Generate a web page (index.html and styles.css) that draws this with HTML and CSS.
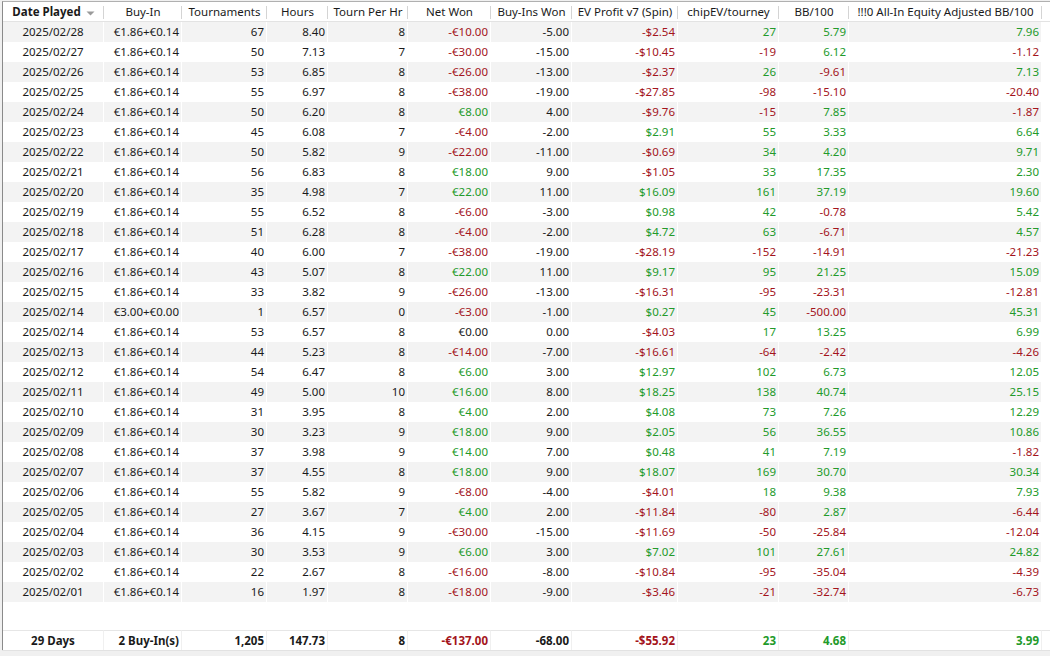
FILE: index.html
```html
<!DOCTYPE html>
<html>
<head>
<meta charset="utf-8">
<link rel="stylesheet" href="styles.css">
</head>
<body>
<div class="frame">
<div class="grid">
<table class="stats">
<colgroup>
<col class="c1"><col class="c2"><col class="c3"><col class="c4"><col class="c5"><col class="c6"><col class="c7"><col class="c8"><col class="c9"><col class="c10"><col class="c11"><col class="c12">
</colgroup>
<thead>
<tr>
<th class="sorted">Date Played <svg class="arrow" width="9" height="6" viewBox="0 0 9 6"><path d="M0.5 1.5 L8.5 1.5 L4.5 5.5 Z" fill="#9a9a9a"/></svg></th>
<th>Buy-In</th><th>Tournaments</th><th>Hours</th><th>Tourn Per Hr</th><th>Net Won</th><th>Buy-Ins Won</th><th>EV Profit v7 (Spin)</th><th>chipEV/tourney</th><th>BB/100</th><th>!!!0 All-In Equity Adjusted BB/100</th><th class="fill"></th>
</tr>
</thead>
<tbody>
<tr><td>2025/02/28</td><td>€1.86+€0.14</td><td>67</td><td>8.40</td><td>8</td><td class="n">-€10.00</td><td>-5.00</td><td class="n">-$2.54</td><td class="p">27</td><td class="p">5.79</td><td class="p">7.96</td><td></td></tr>
<tr><td>2025/02/27</td><td>€1.86+€0.14</td><td>50</td><td>7.13</td><td>7</td><td class="n">-€30.00</td><td>-15.00</td><td class="n">-$10.45</td><td class="n">-19</td><td class="p">6.12</td><td class="n">-1.12</td><td></td></tr>
<tr><td>2025/02/26</td><td>€1.86+€0.14</td><td>53</td><td>6.85</td><td>8</td><td class="n">-€26.00</td><td>-13.00</td><td class="n">-$2.37</td><td class="p">26</td><td class="n">-9.61</td><td class="p">7.13</td><td></td></tr>
<tr><td>2025/02/25</td><td>€1.86+€0.14</td><td>55</td><td>6.97</td><td>8</td><td class="n">-€38.00</td><td>-19.00</td><td class="n">-$27.85</td><td class="n">-98</td><td class="n">-15.10</td><td class="n">-20.40</td><td></td></tr>
<tr><td>2025/02/24</td><td>€1.86+€0.14</td><td>50</td><td>6.20</td><td>8</td><td class="p">€8.00</td><td>4.00</td><td class="n">-$9.76</td><td class="n">-15</td><td class="p">7.85</td><td class="n">-1.87</td><td></td></tr>
<tr><td>2025/02/23</td><td>€1.86+€0.14</td><td>45</td><td>6.08</td><td>7</td><td class="n">-€4.00</td><td>-2.00</td><td class="p">$2.91</td><td class="p">55</td><td class="p">3.33</td><td class="p">6.64</td><td></td></tr>
<tr><td>2025/02/22</td><td>€1.86+€0.14</td><td>50</td><td>5.82</td><td>9</td><td class="n">-€22.00</td><td>-11.00</td><td class="n">-$0.69</td><td class="p">34</td><td class="p">4.20</td><td class="p">9.71</td><td></td></tr>
<tr><td>2025/02/21</td><td>€1.86+€0.14</td><td>56</td><td>6.83</td><td>8</td><td class="p">€18.00</td><td>9.00</td><td class="n">-$1.05</td><td class="p">33</td><td class="p">17.35</td><td class="p">2.30</td><td></td></tr>
<tr><td>2025/02/20</td><td>€1.86+€0.14</td><td>35</td><td>4.98</td><td>7</td><td class="p">€22.00</td><td>11.00</td><td class="p">$16.09</td><td class="p">161</td><td class="p">37.19</td><td class="p">19.60</td><td></td></tr>
<tr><td>2025/02/19</td><td>€1.86+€0.14</td><td>55</td><td>6.52</td><td>8</td><td class="n">-€6.00</td><td>-3.00</td><td class="p">$0.98</td><td class="p">42</td><td class="n">-0.78</td><td class="p">5.42</td><td></td></tr>
<tr><td>2025/02/18</td><td>€1.86+€0.14</td><td>51</td><td>6.28</td><td>8</td><td class="n">-€4.00</td><td>-2.00</td><td class="p">$4.72</td><td class="p">63</td><td class="n">-6.71</td><td class="p">4.57</td><td></td></tr>
<tr><td>2025/02/17</td><td>€1.86+€0.14</td><td>40</td><td>6.00</td><td>7</td><td class="n">-€38.00</td><td>-19.00</td><td class="n">-$28.19</td><td class="n">-152</td><td class="n">-14.91</td><td class="n">-21.23</td><td></td></tr>
<tr><td>2025/02/16</td><td>€1.86+€0.14</td><td>43</td><td>5.07</td><td>8</td><td class="p">€22.00</td><td>11.00</td><td class="p">$9.17</td><td class="p">95</td><td class="p">21.25</td><td class="p">15.09</td><td></td></tr>
<tr><td>2025/02/15</td><td>€1.86+€0.14</td><td>33</td><td>3.82</td><td>9</td><td class="n">-€26.00</td><td>-13.00</td><td class="n">-$16.31</td><td class="n">-95</td><td class="n">-23.31</td><td class="n">-12.81</td><td></td></tr>
<tr><td>2025/02/14</td><td>€3.00+€0.00</td><td>1</td><td>6.57</td><td>0</td><td class="n">-€3.00</td><td>-1.00</td><td class="p">$0.27</td><td class="p">45</td><td class="n">-500.00</td><td class="p">45.31</td><td></td></tr>
<tr><td>2025/02/14</td><td>€1.86+€0.14</td><td>53</td><td>6.57</td><td>8</td><td>€0.00</td><td>0.00</td><td class="n">-$4.03</td><td class="p">17</td><td class="p">13.25</td><td class="p">6.99</td><td></td></tr>
<tr><td>2025/02/13</td><td>€1.86+€0.14</td><td>44</td><td>5.23</td><td>8</td><td class="n">-€14.00</td><td>-7.00</td><td class="n">-$16.61</td><td class="n">-64</td><td class="n">-2.42</td><td class="n">-4.26</td><td></td></tr>
<tr><td>2025/02/12</td><td>€1.86+€0.14</td><td>54</td><td>6.47</td><td>8</td><td class="p">€6.00</td><td>3.00</td><td class="p">$12.97</td><td class="p">102</td><td class="p">6.73</td><td class="p">12.05</td><td></td></tr>
<tr><td>2025/02/11</td><td>€1.86+€0.14</td><td>49</td><td>5.00</td><td>10</td><td class="p">€16.00</td><td>8.00</td><td class="p">$18.25</td><td class="p">138</td><td class="p">40.74</td><td class="p">25.15</td><td></td></tr>
<tr><td>2025/02/10</td><td>€1.86+€0.14</td><td>31</td><td>3.95</td><td>8</td><td class="p">€4.00</td><td>2.00</td><td class="p">$4.08</td><td class="p">73</td><td class="p">7.26</td><td class="p">12.29</td><td></td></tr>
<tr><td>2025/02/09</td><td>€1.86+€0.14</td><td>30</td><td>3.23</td><td>9</td><td class="p">€18.00</td><td>9.00</td><td class="p">$2.05</td><td class="p">56</td><td class="p">36.55</td><td class="p">10.86</td><td></td></tr>
<tr><td>2025/02/08</td><td>€1.86+€0.14</td><td>37</td><td>3.98</td><td>9</td><td class="p">€14.00</td><td>7.00</td><td class="p">$0.48</td><td class="p">41</td><td class="p">7.19</td><td class="n">-1.82</td><td></td></tr>
<tr><td>2025/02/07</td><td>€1.86+€0.14</td><td>37</td><td>4.55</td><td>8</td><td class="p">€18.00</td><td>9.00</td><td class="p">$18.07</td><td class="p">169</td><td class="p">30.70</td><td class="p">30.34</td><td></td></tr>
<tr><td>2025/02/06</td><td>€1.86+€0.14</td><td>55</td><td>5.82</td><td>9</td><td class="n">-€8.00</td><td>-4.00</td><td class="n">-$4.01</td><td class="p">18</td><td class="p">9.38</td><td class="p">7.93</td><td></td></tr>
<tr><td>2025/02/05</td><td>€1.86+€0.14</td><td>27</td><td>3.67</td><td>7</td><td class="p">€4.00</td><td>2.00</td><td class="n">-$11.84</td><td class="n">-80</td><td class="p">2.87</td><td class="n">-6.44</td><td></td></tr>
<tr><td>2025/02/04</td><td>€1.86+€0.14</td><td>36</td><td>4.15</td><td>9</td><td class="n">-€30.00</td><td>-15.00</td><td class="n">-$11.69</td><td class="n">-50</td><td class="n">-25.84</td><td class="n">-12.04</td><td></td></tr>
<tr><td>2025/02/03</td><td>€1.86+€0.14</td><td>30</td><td>3.53</td><td>9</td><td class="p">€6.00</td><td>3.00</td><td class="p">$7.02</td><td class="p">101</td><td class="p">27.61</td><td class="p">24.82</td><td></td></tr>
<tr><td>2025/02/02</td><td>€1.86+€0.14</td><td>22</td><td>2.67</td><td>8</td><td class="n">-€16.00</td><td>-8.00</td><td class="n">-$10.84</td><td class="n">-95</td><td class="n">-35.04</td><td class="n">-4.39</td><td></td></tr>
<tr><td>2025/02/01</td><td>€1.86+€0.14</td><td>16</td><td>1.97</td><td>8</td><td class="n">-€18.00</td><td>-9.00</td><td class="n">-$3.46</td><td class="n">-21</td><td class="n">-32.74</td><td class="n">-6.73</td><td></td></tr>
<tr class="spacer"><td colspan="12"></td></tr>
</tbody>
<tfoot>
<tr><td>29 Days</td><td>2 Buy-In(s)</td><td>1,205</td><td>147.73</td><td>8</td><td class="n">-€137.00</td><td>-68.00</td><td class="n">-$55.92</td><td class="p">23</td><td class="p">4.68</td><td class="p">3.99</td><td></td></tr>
</tfoot>
</table>
</div>
<div class="bottom"></div>
</div>
</body>
</html>
```
FILE: styles.css
```css
html, body {
  margin: 0;
  padding: 0;
  background: #f0f0f0;
}
body {
  font-family: "Noto Sans", "Open Sans", sans-serif;
  font-size: 11.5px;
  color: #1a1a1a;
}
.frame {
  width: 1050px;
  height: 656px;
  display: flex;
  flex-direction: column;
  padding: 1px 0 0 2px;
  box-sizing: border-box;
}
.grid {
  flex: 1;
  background: #fff;
  border-left: 1px solid #8a8a8a;
  border-top: 1px solid #b0b0b0;
  overflow: hidden;
}
.bottom {
  height: 5px;
  background: #f0f0f0;
  border-top: 1px solid #e2e2e2;
}
.stats {
  table-layout: fixed;
  border-collapse: separate;
  border-spacing: 0;
  width: 1047px;
}
.c1 { width: 101px; }
.c2 { width: 78px; }
.c3 { width: 85px; }
.c4 { width: 61px; }
.c5 { width: 80px; }
.c6 { width: 83px; }
.c7 { width: 81px; }
.c8 { width: 106px; }
.c9 { width: 101px; }
.c10 { width: 70px; }
.c11 { width: 193px; }
.c12 { width: 8px; }

th {
  height: 19px;
  padding: 0;
  font-weight: normal;
  text-align: center;
  white-space: nowrap;
  overflow: hidden;
  border-bottom: 1px solid #e3e3e3;
  background: #fff linear-gradient(#d4d4d4, #d4d4d4) right 4px / 1px 13px no-repeat;
  line-height: 19px;
}
th.fill { background: #fff; }
th.sorted { font-weight: bold; }
.arrow { vertical-align: middle; margin-left: 2px; }

td {
  height: 20px;
  padding: 0 2px 0 0;
  text-align: right;
  white-space: nowrap;
  overflow: hidden;
  line-height: 20px;
  border-right: 1px solid #fff;
  box-sizing: border-box;
}
td:first-child { text-align: center; padding: 0; }
tbody tr:nth-child(odd) td { background: #f3f3f3; }
tbody tr.spacer td { background: #fff; height: 28px; border: none; }
tbody tr td:last-child { background: #fff !important; border-right: none; }

tfoot td {
  font-weight: bold;
  border-top: 1px solid #e6e6e6;
  border-right: 1px solid #f0f0f0;
  height: 21px;
}
tfoot td:last-child { border-right: none; }

.n { color: #a3141c; }
.p { color: #229a2a; }
```
